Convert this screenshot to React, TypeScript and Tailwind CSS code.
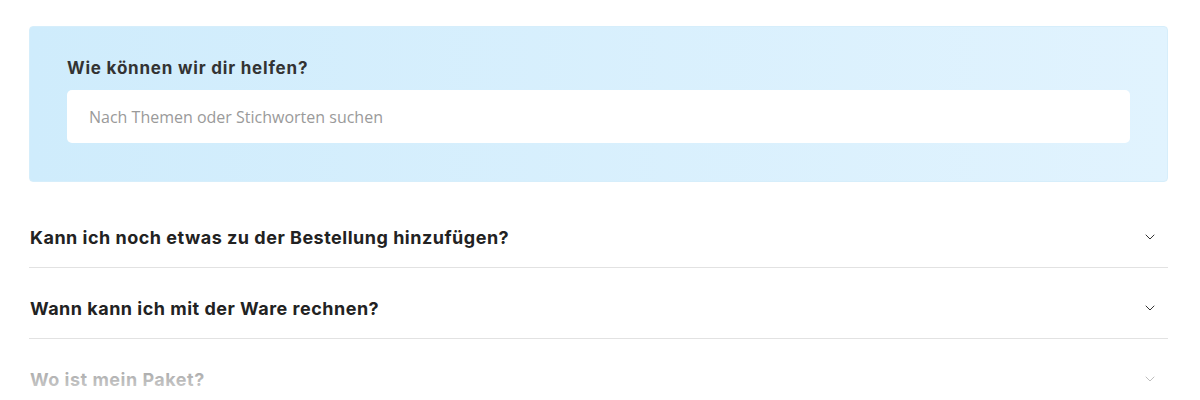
import React from 'react';
import { ChevronDown } from 'lucide-react';

const questions = [
  'Kann ich noch etwas zu der Bestellung hinzufügen?',
  'Wann kann ich mit der Ware rechnen?',
  'Wo ist mein Paket?',
];

const HelpPage = () => {
  return (
    <div className="relative h-[400px] overflow-hidden bg-white pl-[29px] pr-[32px] pt-[26px] font-['Inter',sans-serif]">
      <div className="rounded-[4px] border border-[#d6eefb] bg-gradient-to-r from-[#cfecfc] to-[#e1f3fe] px-[37px] pt-[30px] pb-[38px]">
        <h2 className="mb-[11px] text-[17px] font-bold leading-[22px] tracking-[0.8px] text-[#333]">
          Wie können wir dir helfen?
        </h2>
        <input
          type="text"
          placeholder="Nach Themen oder Stichworten suchen"
          className="h-[53px] w-full rounded-[5px] bg-white px-[22px] font-['Open_Sans',sans-serif] text-[16px] text-[#333] outline-none placeholder:text-[#9a9a9a]"
        />
      </div>

      <div className="mt-[15px]">
        {questions.map((q) => (
          <div
            key={q}
            className="flex h-[71px] items-center justify-between border-b border-[#e2e2e2] pt-[10px] pl-[1px] pr-[10px]"
          >
            <span className="text-[18px] font-bold tracking-[0.5px] text-[#222]">{q}</span>
            <ChevronDown className="h-[16px] w-[16px] text-[#333]" strokeWidth={1.5} />
          </div>
        ))}
      </div>

      <div className="pointer-events-none absolute inset-x-0 bottom-0 h-[50px] bg-gradient-to-b from-white/45 to-white/85" />
    </div>
  );
};

export default HelpPage;
